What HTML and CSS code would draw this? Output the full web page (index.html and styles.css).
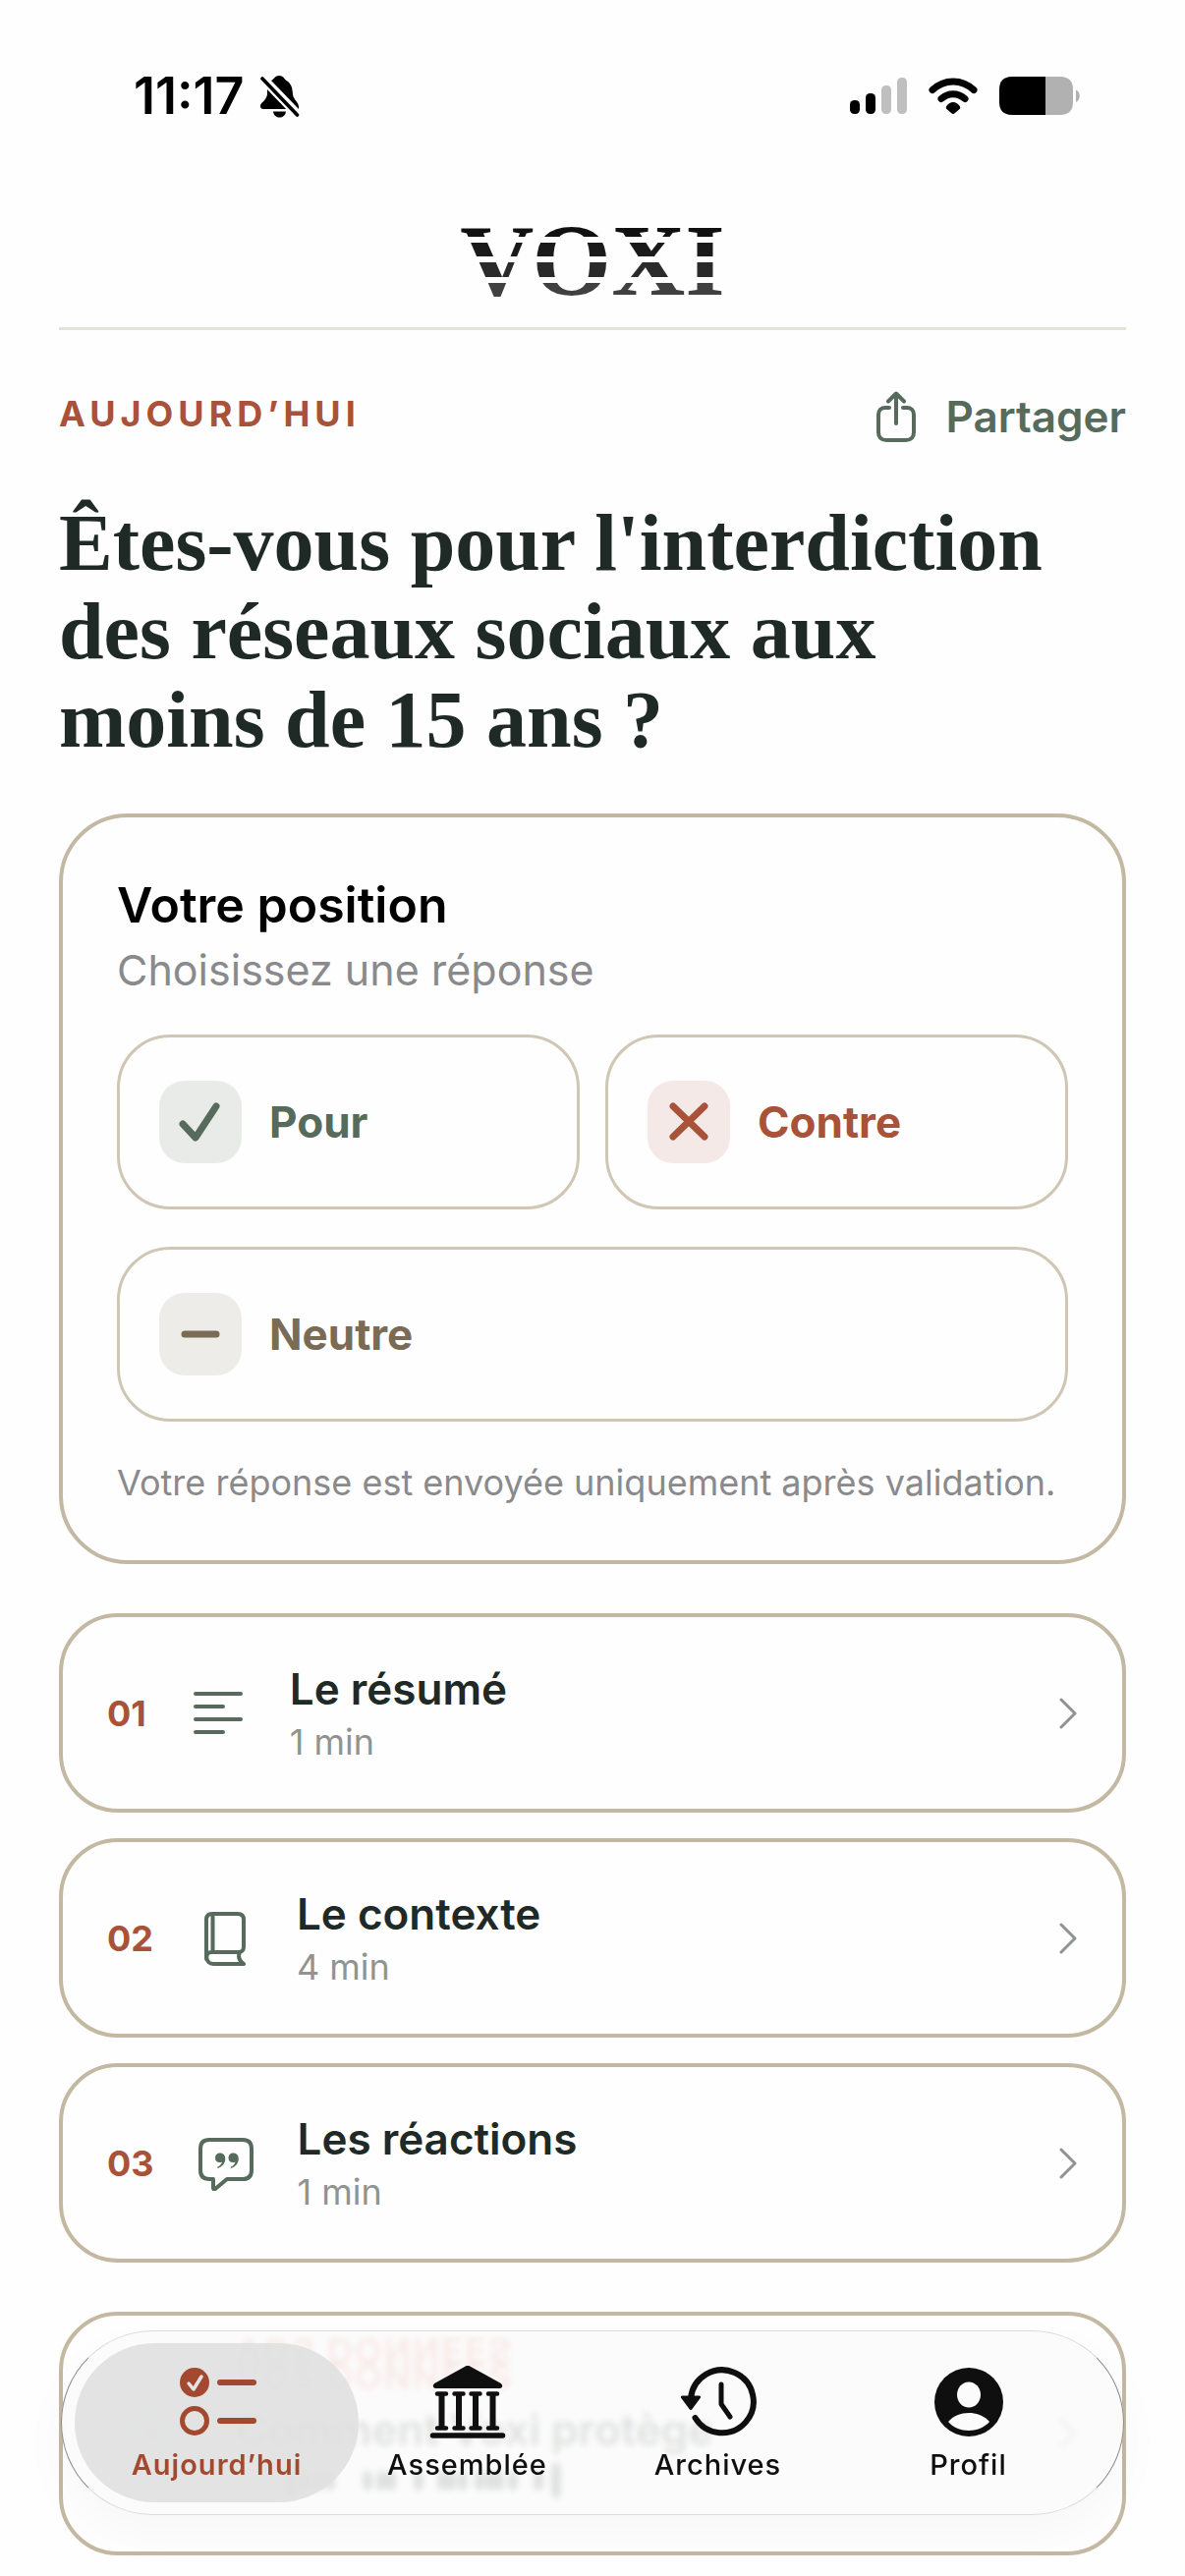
FILE: index.html
```html
<!DOCTYPE html>
<html lang="fr">
<head>
    <meta charset="UTF-8">
    <meta name="viewport" content="width=device-width, initial-scale=1.0">
    <title>Voxi</title>
    <link rel="stylesheet" href="styles.css">
</head>
<body>

    <!-- Status bar -->
    <div class="status-bar">
        <div class="status-left">
            <span class="time">11:17</span>
            <svg width="40" height="44" viewBox="0 0 40 44">
                <path d="M11 6C14 5 14.300 1 19 1s5 3.300 7.500 5C32 9.500 32.500 14 33 20c.3 5 6 8 6 12.500V35z"/>
                <path d="M7 14.500 26.500 35H3c-2 0-3-1-3-3 0-4 6-5 7-12z"/>
                <path d="M13 37.500h13c-1 8-12 8-13 0z"/>
                <path d="M2 4 37.500 41" stroke="#fefefe" stroke-width="8"/>
                <path d="M2 4 37.500 41" stroke="#000" stroke-width="3.600" stroke-linecap="round"/>
            </svg>
        </div>
        <div class="status-right">
            <svg width="58" height="38" viewBox="0 0 58 38">
                <rect x="0" y="23" width="10" height="14" rx="4.500"/>
                <rect x="16" y="16" width="10" height="21" rx="4.500"/>
                <rect x="32" y="8" width="10" height="29" rx="4.500" fill="#bfbfbf"/>
                <rect x="48" y="0" width="10" height="37" rx="4.500" fill="#bfbfbf"/>
            </svg>
            <svg width="50" height="38" viewBox="0 0 50 38">
                <path d="M4 12.500C16 1 34 1 46 12.500M13 21.500c7-6.500 17-6.500 24 0" fill="none" stroke="#000" stroke-width="7" stroke-linecap="round"/>
                <path d="M18 29.500c3.500-6 10.500-6 14 0 .5 1 .2 2-.7 2.800l-4.700 4c-1 .9-2.200.9-3.200 0l-4.700-4c-.9-.8-1.200-1.800-.7-2.800z"/>
            </svg>
            <svg width="83" height="40" viewBox="0 0 83 40">
                <path d="M13 0h34v39H13C4 39 0 34 0 26V13C0 5 4 0 13 0z"/>
                <path d="M47 0h15c9 0 13 5 13 13v13c0 8-4 13-13 13H47z" fill="#b1b1b1"/>
                <path d="M78 13.500c5 2 5 10.500 0 12.500z" fill="#b1b1b1"/>
            </svg>
        </div>
    </div>

    <main class="page">
        <header class="header">
            <div class="logo">VOXI</div>
        </header>

        <div class="top-row">
            <p class="eyebrow">Aujourd’hui</p>
            <button class="share">
                <svg width="40" height="52" viewBox="0 0 40 52" fill="none" stroke="currentColor" stroke-width="4" stroke-linecap="round" stroke-linejoin="round">
                    <path d="M13 17H9c-4 0-7 2.500-7 7v18c0 5 3 8 8 8h20c5 0 8-3 8-8V24c0-4.500-3-7-7-7h-4"/>
                    <path d="M20 33V3M12 10.500 20 2.500l8 8"/>
                </svg>
                Partager
            </button>
        </div>

        <h1 class="question">Êtes-vous pour l'interdiction des réseaux sociaux aux moins de 15 ans ?</h1>

        <!-- Vote -->
        <section class="card vote">
            <div>
                <h2 class="vote-title">Votre position</h2>
                <p class="vote-hint">Choisissez une réponse</p>
            </div>
            <div class="choices">
                <button class="choice pour">
                    <span class="tile">
                        <svg width="84" height="84" viewBox="0 0 84 84"><path d="M24 44 37 58 58 26"/></svg>
                    </span>
                    Pour
                </button>
                <button class="choice contre">
                    <span class="tile">
                        <svg width="84" height="84" viewBox="0 0 84 84"><path d="M26 26 58 57M58 26 26 57"/></svg>
                    </span>
                    Contre
                </button>
                <button class="choice neutre">
                    <span class="tile">
                        <svg width="84" height="84" viewBox="0 0 84 84"><path d="M26 42h32"/></svg>
                    </span>
                    Neutre
                </button>
            </div>
            <p class="vote-note">Votre réponse est envoyée uniquement après validation.</p>
        </section>

        <!-- Sections -->
        <nav class="sections">
            <a class="card section" href="#resume">
                <span class="number">01</span>
                <svg class="section-icon" width="62" height="56" viewBox="0 0 62 56">
                    <path d="M8 8h46M8 21h28M8 34h46M8 47h28"/>
                </svg>
                <span class="section-text">
                    <span class="section-title">Le résumé</span>
                    <span class="section-time">1 min</span>
                </span>
                <svg class="chevron" width="18" height="32" viewBox="0 0 18 32"><path d="M2 2l14 14L2 30"/></svg>
            </a>
            <a class="card section" href="#contexte">
                <span class="number">02</span>
                <svg class="section-icon" width="62" height="56" viewBox="0 0 62 56">
                    <path d="M12 49V9c0-4 2-6 6-6h26c4 0 6 2 6 6v28c0 3-2 5-5 5H17c-7 0-6 12 2 12h31M18.500 3v38M46 42c-2 4-1 8 4 12"/>
                </svg>
                <span class="section-text">
                    <span class="section-title">Le contexte</span>
                    <span class="section-time">4 min</span>
                </span>
                <svg class="chevron" width="18" height="32" viewBox="0 0 18 32"><path d="M2 2l14 14L2 30"/></svg>
            </a>
            <a class="card section" href="#reactions">
                <span class="number">03</span>
                <svg class="section-icon" width="62" height="56" viewBox="0 0 62 56">
                    <path d="M14 4h34c6 0 9 3 9 9v22c0 6-3 9-9 9H32L20 54c-1 .8-2 .4-2-1v-9h-4c-6 0-9-3-9-9V13c0-6 3-9 9-9z"/>
                    <path class="quote" d="M25 17.500c-3 0-5 2-5 5s2 4.500 4.500 4.500c1.200 0 2-.3 2.500-.6-.6 2.400-2.200 4-4.500 5-.8.6-.2 1.700.8 1.300 4-1.500 7-5 7-9.500 0-3.400-2-5.700-5.300-5.700zM38.500 17.500c-3 0-5 2-5 5s2 4.500 4.500 4.500c1.200 0 2-.3 2.500-.6-.6 2.400-2.200 4-4.500 5-.8.6-.2 1.700.8 1.300 4-1.500 7-5 7-9.500 0-3.400-2-5.700-5.300-5.700z"/>
                </svg>
                <span class="section-text">
                    <span class="section-title">Les réactions</span>
                    <span class="section-time">1 min</span>
                </span>
                <svg class="chevron" width="18" height="32" viewBox="0 0 18 32"><path d="M2 2l14 14L2 30"/></svg>
            </a>
        </nav>

        <a class="card privacy" href="#donnees">
            <span class="privacy-icon"></span>
            <span class="privacy-text">
                <span class="privacy-label">Vos donnees</span>
                <span class="privacy-title">Comment Voxi protège</span>
                <svg width="340" height="36" viewBox="0 0 340 36" fill="none" stroke="currentColor" stroke-width="10">
                    <path d="M56 6v24M70 13v10M84 13v10M96 13v10M134 13v10M148 13v10M158 13v10M186 13v10M210 13v10M219 13v10M231 13v10M248 13v10M259 13v10M268 13v10M282 13v10M308 13v10M326 5v26" stroke-linecap="round"/>
                </svg>
            </span>
            <svg class="chevron" width="18" height="32" viewBox="0 0 18 32"><path d="M2 2l14 14L2 30"/></svg>
        </a>
    </main>

    <!-- Tab bar -->
    <nav class="tab-bar">
        <a class="tab active" href="#aujourdhui">
            <svg width="80" height="76" viewBox="0 0 80 76">
                <circle cx="17" cy="18" r="15"/>
                <path d="M11 19l5 6 8-13" fill="none" stroke="#e4e4e4" stroke-width="3.500" stroke-linecap="round" stroke-linejoin="round"/>
                <circle cx="17" cy="57" r="12.500" fill="none" stroke="currentColor" stroke-width="5"/>
                <path d="M43 18h34M43 57h34" stroke="currentColor" stroke-width="6" stroke-linecap="round"/>
            </svg>
            Aujourd’hui
        </a>
        <a class="tab" href="#assemblee">
            <svg width="80" height="76" viewBox="0 0 80 76">
                <path d="M40 1c1.500 0 2.300.4 3.500 1.200L73 18.500c3.500 2 2.500 5.500-.5 5.500h-65c-3 0-4-3.500-.5-5.500L36.500 2.200C37.700 1.400 38.500 1 40 1z"/>
                <path d="M9 29.500h9M26.500 29.500h9M43.500 29.500h9M61 29.500h9M9 64.500h9M26.500 64.500h9M43.500 64.500h9M61 64.500h9" stroke="currentColor" stroke-width="4.500" stroke-linecap="round"/>
                <path d="M13.500 29v36M31 29v36M48 29v36M65.500 29v36" stroke="currentColor" stroke-width="6"/>
                <path d="M4.500 72h71" stroke="currentColor" stroke-width="5.500" stroke-linecap="round"/>
            </svg>
            Assemblée
        </a>
        <a class="tab" href="#archives">
            <svg width="80" height="76" viewBox="0 0 80 76">
                <path d="M12 34a32 32 0 1 1 4.500 20" fill="none" stroke="currentColor" stroke-width="6" stroke-linecap="round"/>
                <path d="M3.500 31.500h17c1.500 0 2 1 1.300 2.300L13.500 45c-.8 1.200-2.200 1.200-3 0L2.200 33.800c-.7-1.300-.2-2.300 1.300-2.300z"/>
                <path d="M43 20v20l9 13" fill="none" stroke="currentColor" stroke-width="5" stroke-linecap="round" stroke-linejoin="round"/>
            </svg>
            Archives
        </a>
        <a class="tab" href="#profil">
            <svg width="80" height="76" viewBox="0 0 80 76">
                <circle cx="40" cy="38" r="35"/>
                <ellipse cx="40" cy="30.500" rx="12" ry="13" fill="#fbfbfb"/>
                <path d="M19 58c10-12 32-12 42 0-10 12-32 12-42 0z" fill="#fbfbfb"/>
            </svg>
            Profil
        </a>
    </nav>

</body>
</html>
```
FILE: styles.css
```css
* {
    box-sizing: border-box;
}
body {
    font-family: Inter, "Liberation Sans", sans-serif;
    background-color: #fefefe;
    color: #1f2a27;
    margin: 0;
}
h1, h2, p {
    margin: 0;
}
a {
    color: inherit;
    text-decoration: none;
}
button {
    font-family: inherit;
    background: none;
    border: none;
    padding: 0;
    cursor: pointer;
}
svg {
    display: block;
    flex-shrink: 0;
}

/* Status bar */
.status-bar {
    display: flex;
    justify-content: space-between;
    align-items: center;
    padding: 68px 106px 0 136px;
    color: #000;
}
.status-left {
    display: flex;
    align-items: center;
    gap: 16px;
}
.status-right {
    display: flex;
    align-items: center;
    gap: 22px;
}
.time {
    font-size: 52px;
    line-height: 60px;
    font-weight: 600;
}

.page {
    padding: 0 60px;
}

/* Header */
.header {
    margin-top: 85px;
    padding-bottom: 16px;
    border-bottom: 3px solid #e5e3d9;
    text-align: center;
}
.logo {
    display: inline-block;
    vertical-align: top;
    font-family: "Liberation Serif", serif;
    font-size: 104px;
    line-height: 104px;
    font-weight: 700;
    color: transparent;
    /* dark bands with clear gaps between them */
    background: linear-gradient(#111 0 28px, transparent 28px 34px, #1a1a1a 34px 48px, transparent 48px 54px, #2a2a2a 54px 69px, transparent 69px 75px, #404040 75px);
    -webkit-background-clip: text;
    background-clip: text;
}
.top-row {
    display: flex;
    justify-content: space-between;
    align-items: flex-start;
    margin-top: 62px;
}
.eyebrow {
    font-size: 36px;
    line-height: 46px;
    font-weight: 700;
    letter-spacing: 5px;
    text-transform: uppercase;
    color: #a9523a;
}
.share {
    display: flex;
    align-items: center;
    gap: 30px;
    font-size: 44px;
    line-height: 52px;
    font-weight: 600;
    color: #566b5b;
}
.question {
    font-family: "Liberation Serif", serif;
    font-size: 82px;
    line-height: 90px;
    font-weight: 700;
    margin: 58px 0 50px;
    padding-right: 60px;
}

/* Cards */
.card {
    border: 4px solid #c3b9a2;
    border-radius: 60px;
}
.vote {
    display: flex;
    flex-direction: column;
    gap: 38px;
    padding: 59px 55px 55px;
    border-radius: 70px;
}
.vote-title {
    font-size: 50px;
    line-height: 60px;
    font-weight: 600;
    color: #000;
    margin-bottom: 8px;
}
.vote-hint {
    font-size: 43px;
    line-height: 56px;
    color: #8a8a8c;
}
.vote-note {
    font-size: 36px;
    line-height: 48px;
    color: #8a8a8c;
}
.choices {
    display: grid;
    grid-template-columns: 1fr 1fr;
    gap: 38px 26px;
}
.choice {
    display: flex;
    align-items: center;
    gap: 28px;
    height: 178px;
    padding: 0 40px;
    border: 3px solid #cfc6b4;
    border-radius: 54px;
    font-size: 44px;
    font-weight: 700;
}
.tile {
    border-radius: 26px;
}
.tile path {
    fill: none;
    stroke: currentColor;
    stroke-width: 7;
    stroke-linecap: round;
    stroke-linejoin: round;
}
.pour {
    color: #566b5b;
}
.pour .tile {
    background-color: #e9ebe9;
}
.contre {
    color: #a9523a;
}
.contre .tile {
    background-color: #f4e9e7;
}
.neutre {
    grid-column: 1 / 3;
    color: #7a6b56;
}
.neutre .tile {
    background-color: #eeece8;
}

/* Section list */
.sections {
    display: grid;
    gap: 26px;
    margin: 50px 0;
}
.section {
    display: flex;
    align-items: center;
    gap: 42px;
    height: 203px;
    padding: 0 46px 0 45px;
}
.number {
    font-size: 36px;
    font-weight: 700;
    color: #a9523a;
}
.section-icon {
    fill: none;
    stroke: #566b5b;
    stroke-width: 4;
    stroke-linecap: round;
    stroke-linejoin: round;
}
.section-icon .quote {
    fill: #566b5b;
    stroke: none;
}
.section-text {
    display: flex;
    flex-direction: column;
    gap: 6px;
    flex: 1;
}
.section-title {
    font-size: 44px;
    line-height: 52px;
    font-weight: 600;
}
.section-time {
    font-size: 36px;
    line-height: 44px;
    color: #8f9492;
}
.chevron {
    fill: none;
    stroke: #8f9492;
    stroke-width: 3;
    stroke-linecap: round;
    stroke-linejoin: round;
}

/* Privacy card, seen through the tab bar */
.privacy {
    display: flex;
    align-items: center;
    gap: 40px;
    height: 248px;
    padding: 0 46px;
}
.privacy-icon {
    width: 90px;
    height: 90px;
    border-radius: 50%;
    background: radial-gradient(#8fb39b, transparent 70%);
}
.privacy-text {
    display: flex;
    flex-direction: column;
    gap: 8px;
    flex: 1;
    padding-bottom: 12px;
    color: #1f2a27;
}
.privacy-label {
    font-size: 36px;
    line-height: 40px;
    font-weight: 600;
    letter-spacing: 2px;
    text-transform: uppercase;
    color: #e0694a;
    -webkit-box-reflect: above -14px;
}
.privacy-title {
    font-size: 44px;
    line-height: 52px;
    font-weight: 600;
}

/* Tab bar */
.tab-bar {
    position: fixed;
    left: 62px;
    right: 62px;
    bottom: 62px;
    display: flex;
    height: 188px;
    padding: 0 30px;
    border: 1px solid #dcdcdc;
    border-left-color: #8a8a8a;
    border-right-color: #8a8a8a;
    border-radius: 94px;
    background-color: rgba(250, 250, 250, 0.88);
    -webkit-backdrop-filter: blur(3px);
    backdrop-filter: blur(3px);
    box-shadow: 0 20px 50px rgba(0, 0, 0, 0.03);
}
.tab {
    position: relative;
    flex: 1;
    display: flex;
    flex-direction: column;
    align-items: center;
    gap: 6px;
    padding-top: 34px;
    font-size: 29px;
    line-height: 40px;
    font-weight: 500;
    letter-spacing: 1px;
    color: #0f0f0f;
    fill: currentColor;
}
.active {
    font-weight: 600;
    color: #a3492f;
}
.active::before {
    content: "";
    position: absolute;
    inset: 12px -17px;
    border-radius: 81px;
    background-color: rgba(224, 224, 224, 0.88);
    z-index: -1;
}
```
